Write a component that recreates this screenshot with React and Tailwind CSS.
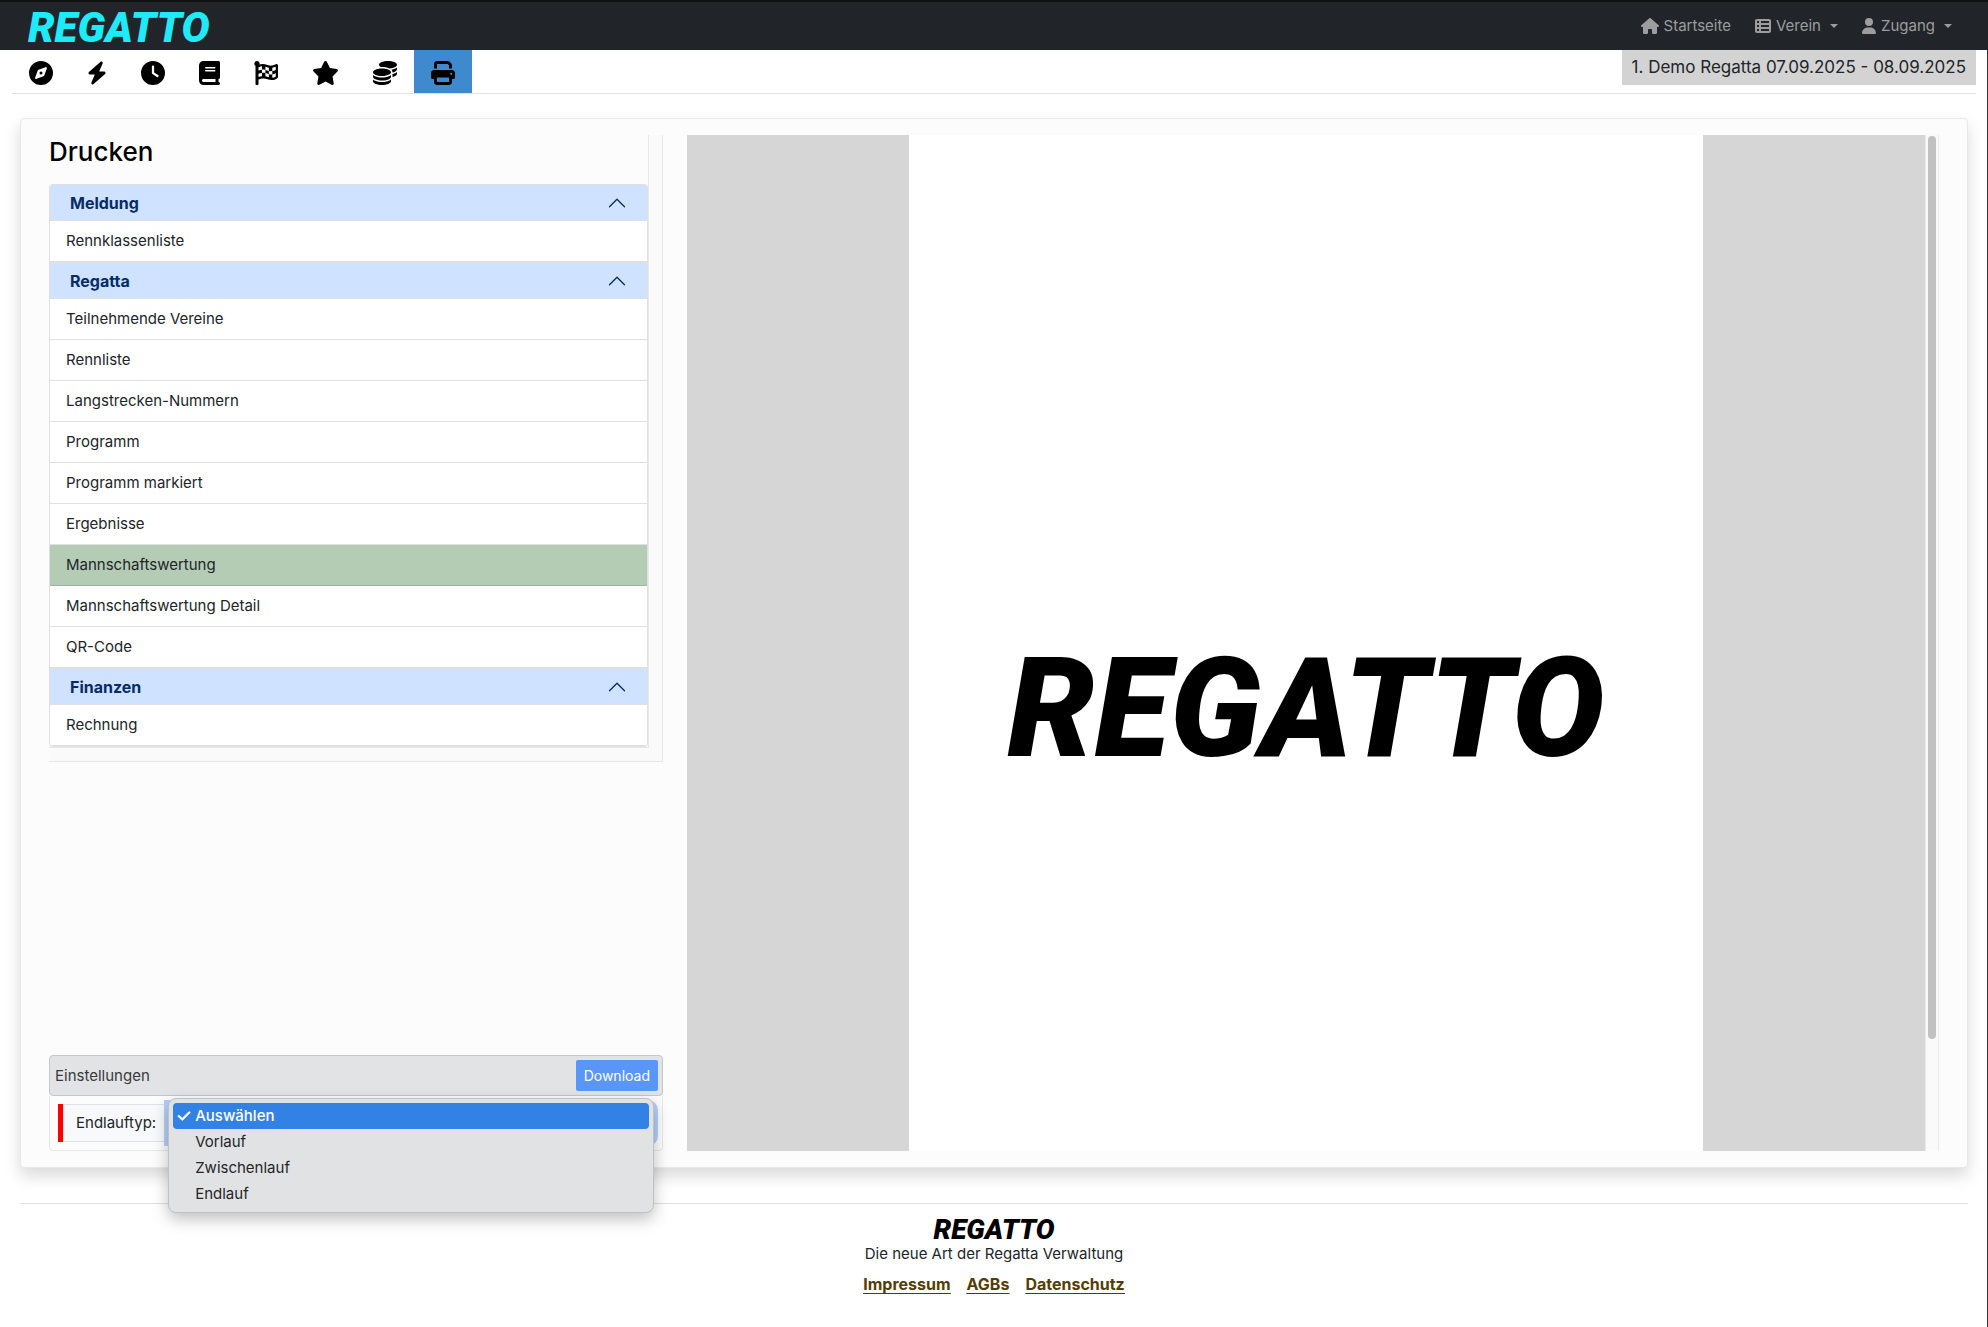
import { useState } from "react";
import { FaFlagCheckered } from "react-icons/fa";
import {
  FaBolt,
  FaBook,
  FaCheck,
  FaClock,
  FaCoins,
  FaCompass,
  FaHouse,
  FaPrint,
  FaStar,
  FaTableList,
  FaUser,
} from "react-icons/fa6";

const TOOLS = [
  { label: "Übersicht", Icon: FaCompass, size: "w-6" },
  { label: "Schnellzugriff", Icon: FaBolt, size: "w-5" },
  { label: "Zeitplan", Icon: FaClock, size: "w-6" },
  { label: "Meldebuch", Icon: FaBook, size: "w-[21px]" },
  { label: "Rennen", Icon: FaFlagCheckered, size: "w-6" },
  { label: "Wertung", Icon: FaStar, size: "w-[27px]" },
  { label: "Finanzen", Icon: FaCoins, size: "w-6" },
  { label: "Drucken", Icon: FaPrint, size: "w-6", active: true },
];

const SECTIONS = [
  { title: "Meldung", items: ["Rennklassenliste"] },
  {
    title: "Regatta",
    items: [
      "Teilnehmende Vereine",
      "Rennliste",
      "Langstrecken-Nummern",
      "Programm",
      "Programm markiert",
      "Ergebnisse",
      "Mannschaftswertung",
      "Mannschaftswertung Detail",
      "QR-Code",
    ],
  },
  { title: "Finanzen", items: ["Rechnung"] },
];

const RUN_TYPES = ["Auswählen", "Vorlauf", "Zwischenlauf", "Endlauf"];

export default function App() {
  const [report, setReport] = useState("Mannschaftswertung");
  const [runType, setRunType] = useState("Auswählen");

  return (
    <div className="min-h-screen bg-white font-['Inter','Liberation_Sans',sans-serif] text-[15px] leading-6 text-[#212529] shadow-[inset_-1px_0_#333333]">
      <Navbar />
      <Toolbar />

      <main className="mx-5 mt-6 grid grid-cols-12 gap-x-6 rounded border border-[#e6e8ea] bg-[#fcfcfc] px-7 py-4 shadow-[0_8px_16px_rgba(0,0,0,0.15)]">
        <div className="col-span-4 flex flex-col justify-between">
          <div className="border-r border-b border-[#e8e8e8] bg-[#fafafa] pr-[13px] pb-[13px]">
            <div className="border-r border-b border-[#e8e8e8] bg-[#fcfcfc]">
              <h1 className="pb-[15px] text-[26px] leading-[34px] font-medium text-black">Drucken</h1>
              <div className="overflow-hidden rounded border-x border-b border-[#dee0e2] bg-white">
                {SECTIONS.map((s) => (
                  <Section key={s.title} section={s} selected={report} onSelect={setReport} />
                ))}
              </div>
            </div>
          </div>
          <Settings value={runType} onChange={setRunType} />
        </div>

        <Preview />
      </main>

      <Footer />
    </div>
  );
}

function Logo({ className }) {
  return <span className={`block font-[Roboto,sans-serif] font-black italic ${className}`}>REGATTO</span>;
}

function Navbar() {
  return (
    <header className="flex h-[50px] items-center justify-between border-t-2 border-[#111214] bg-[#212529] pr-9 pl-7">
      <a href="#start" className="pt-1">
        <Logo className="text-[42px] leading-[46px] text-[#1eebf7]" />
      </a>
      <nav className="flex items-center gap-6 text-[#9b9d9f]">
        <a href="#startseite" className="flex items-center gap-[5px]">
          <FaHouse className="h-4 w-[18px]" />
          Startseite
        </a>
        <button className="flex items-center gap-[5px]">
          <FaTableList className="size-4" />
          Verein
          <Caret />
        </button>
        <button className="flex items-center gap-[5px]">
          <FaUser className="h-4 w-[14px]" />
          Zugang
          <Caret />
        </button>
      </nav>
    </header>
  );
}

function Caret() {
  return (
    <svg viewBox="0 0 8 4" className="ml-1 h-1 w-2" fill="currentColor" aria-hidden="true">
      <path d="M0 0h8L4 4z" />
    </svg>
  );
}

function Toolbar() {
  return (
    <div className="mx-3 flex items-start justify-between border-b border-[#dee2e6]">
      <div className="flex">
        {TOOLS.map(({ label, Icon, size, active }) => (
          <button
            key={label}
            aria-label={label}
            className={`flex h-[43px] items-center px-[17px] pt-[3px] text-black ${active ? "bg-[#3f8ace]" : ""}`}
          >
            <Icon className={`h-6 ${size}`} />
          </button>
        ))}
      </div>
      <p className="bg-[#d3d3d3] px-[10px] py-1 text-[17px] leading-[27px]">1. Demo Regatta 07.09.2025 - 08.09.2025</p>
    </div>
  );
}

function Section({ section, selected, onSelect }) {
  const [open, setOpen] = useState(true);
  return (
    <section className="border-t border-[#dee0e2]">
      <button
        onClick={() => setOpen(!open)}
        aria-expanded={open}
        className="flex h-9 w-full items-center justify-between border-b border-[#dee0e2] bg-[#cfe2ff] px-5 text-base font-bold text-[#052c65]"
      >
        {section.title}
        <svg
          viewBox="0 0 16 16"
          className={`size-5 ${open ? "rotate-180" : ""}`}
          fill="none"
          stroke="currentColor"
          strokeLinecap="round"
          strokeLinejoin="round"
          aria-hidden="true"
        >
          <path d="m2 5 6 6 6-6" />
        </svg>
      </button>
      {open && (
        <ul>
          {section.items.map((item) => (
            <li key={item}>
              <button
                onClick={() => onSelect(item)}
                className={`h-[41px] w-full border-b px-4 text-left ${
                  item === selected ? "border-[#a0b3a0] bg-[#b4cbb4]" : "border-[#dee0e2] bg-white"
                }`}
              >
                {item}
              </button>
            </li>
          ))}
        </ul>
      )}
    </section>
  );
}

function Settings({ value, onChange }) {
  return (
    <div>
      <div className="flex items-center justify-between rounded border border-[#c4c8cb] bg-[#e2e3e5] py-1 pr-1 pl-[5px] text-[#383b3e]">
        Einstellungen
        <button className="h-[31px] rounded-xs bg-[#5a96f8] px-2 text-sm text-white">Download</button>
      </div>
      <div className="rounded-b border border-t-0 border-[#e8e8e8] p-2">
        <div className="flex h-[38px] border-l-[5px] border-[#ff0000]">
          <label
            htmlFor="run-type"
            className="flex items-center border border-r-0 border-[#dee2e6] bg-[#f8f9fa] px-3"
          >
            Endlauftyp:
          </label>
          <div className="relative flex-1">
            <select
              id="run-type"
              value={value}
              onChange={(e) => onChange(e.target.value)}
              className="h-full w-full appearance-none rounded-r-md border border-[#86b7fe] bg-white px-3 ring-4 ring-[#b3cffa]"
            >
              {RUN_TYPES.map((t) => (
                <option key={t}>{t}</option>
              ))}
            </select>
            <RunTypeMenu value={value} onChange={onChange} />
          </div>
        </div>
      </div>
    </div>
  );
}

function RunTypeMenu({ value, onChange }) {
  return (
    <ul
      role="listbox"
      aria-label="Endlauftyp"
      className="absolute inset-x-0 -top-[6px] z-10 rounded-lg border border-[#bfc1c3] bg-[#e1e2e4] p-1 pb-[5px] shadow-[0_6px_16px_rgba(0,0,0,0.25)]"
    >
      {RUN_TYPES.map((t) => {
        const active = t === value;
        return (
          <li
            key={t}
            role="option"
            aria-selected={active}
            onClick={() => onChange(t)}
            className={`flex h-[26px] items-center rounded pl-1 ${
              active ? "bg-[#3282e6] font-medium text-white" : "text-[#242628]"
            }`}
          >
            <span className="w-[18px]">
              {active && <FaCheck className="size-[14px] stroke-current [stroke-width:24px]" />}
            </span>
            {t}
          </li>
        );
      })}
    </ul>
  );
}

function Preview() {
  return (
    <div className="col-span-8 flex h-[calc(100vh-311px)]">
      <div className="flex flex-1 justify-center overflow-hidden bg-[#d6d6d6]">
        {/* A4 sheet, taller than the pane */}
        <div className="flex h-[1123px] w-[794px] items-center justify-center bg-white pt-6">
          <Logo className="text-[138px] leading-none text-black" />
        </div>
      </div>
      <div className="w-[14px] border-x border-[#ebebeb] bg-[#fafafa] px-0.5 pt-px">
        <div className="h-[89%] rounded-full bg-[#c1c1c1]" />
      </div>
    </div>
  );
}

function Footer() {
  return (
    <footer className="mx-5 mt-[35px] flex flex-col items-center border-t border-[#dee0e2] pt-3">
      <Logo className="text-[28px] leading-7 text-black" />
      <p className="leading-5">Die neue Art der Regatta Verwaltung</p>
      <div className="mt-2 flex gap-4 text-base font-bold text-[#523e02] underline underline-offset-3">
        <a href="#impressum">Impressum</a>
        <a href="#agbs">AGBs</a>
        <a href="#datenschutz">Datenschutz</a>
      </div>
    </footer>
  );
}
